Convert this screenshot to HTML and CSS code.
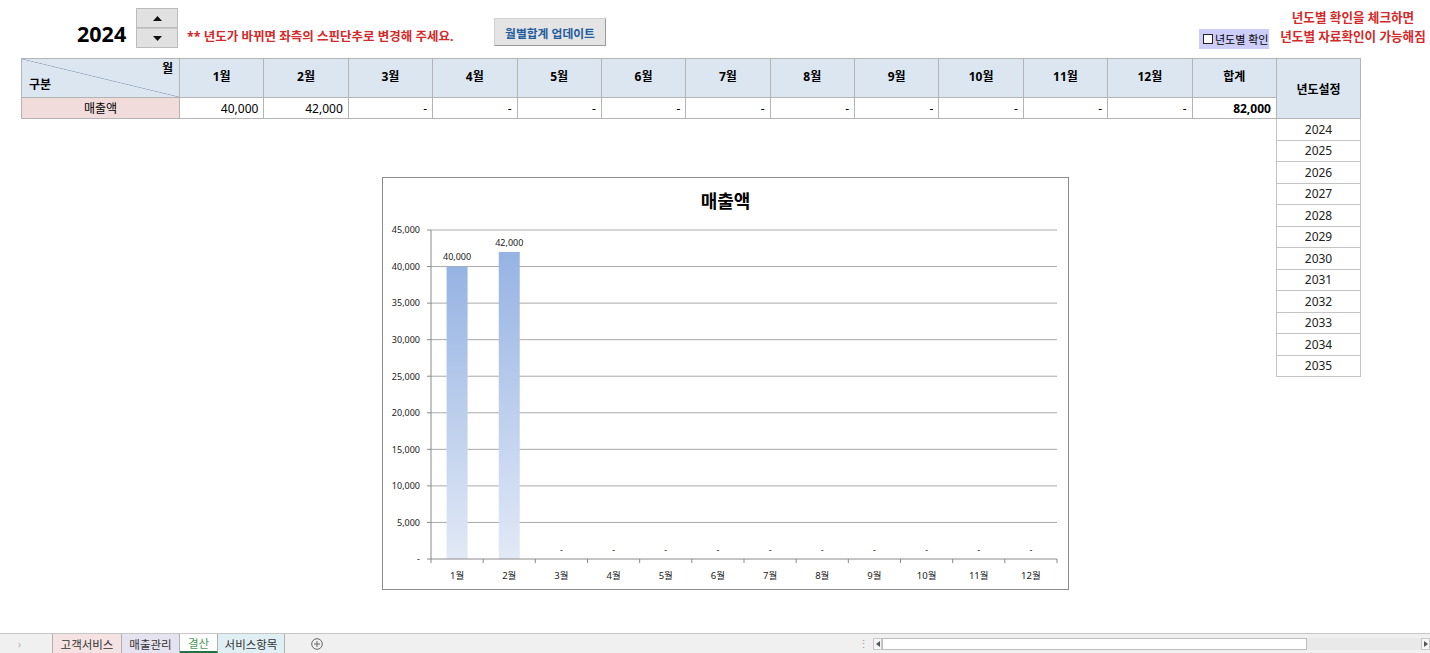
FILE: index.html
```html
<!DOCTYPE html>
<html lang="ko">
<head>
<meta charset="utf-8">
<title>결산</title>
<link rel="stylesheet" href="styles.css">
</head>
<body>
<div class="page">
  <header class="topbar">
    <div class="year">2024</div>
    <div class="spin">
      <div class="spin-btn"><svg width="9" height="5" viewBox="0 0 9 5"><polygon points="0,5 9,5 4.5,0" fill="#111"/></svg></div>
      <div class="spin-btn"><svg width="9" height="5" viewBox="0 0 9 5"><polygon points="0,0 9,0 4.5,5" fill="#111"/></svg></div>
    </div>
    <div class="note">** 년도가 바뀌면 좌측의 스핀단추로 변경해 주세요.</div>
    <div class="update-btn">월별합계 업데이트</div>
    <div class="spacer"></div>
    <div class="check"><span class="box"></span><span>년도별 확인</span></div>
    <div class="hint">년도별 확인을 체크하면<br>년도별 자료확인이 가능해짐</div>
  </header>

  <main class="main">
    <section class="left">
      <div class="grid">
        <div class="cell head diag"><span class="diag-top">월</span><span class="diag-bottom">구분</span></div>
        <div class="cell head">1월</div>
        <div class="cell head">2월</div>
        <div class="cell head">3월</div>
        <div class="cell head">4월</div>
        <div class="cell head">5월</div>
        <div class="cell head">6월</div>
        <div class="cell head">7월</div>
        <div class="cell head">8월</div>
        <div class="cell head">9월</div>
        <div class="cell head">10월</div>
        <div class="cell head">11월</div>
        <div class="cell head">12월</div>
        <div class="cell head">합계</div>

        <div class="cell label">매출액</div>
        <div class="cell num">40,000</div>
        <div class="cell num">42,000</div>
        <div class="cell num">-</div>
        <div class="cell num">-</div>
        <div class="cell num">-</div>
        <div class="cell num">-</div>
        <div class="cell num">-</div>
        <div class="cell num">-</div>
        <div class="cell num">-</div>
        <div class="cell num">-</div>
        <div class="cell num">-</div>
        <div class="cell num">-</div>
        <div class="cell num total">82,000</div>
      </div>

      <div class="chart">
        <svg class="chart-svg" width="685" height="411" viewBox="0 0 685 411">
          <defs>
            <linearGradient id="barGrad" x1="0" y1="0" x2="0" y2="1">
              <stop offset="0" stop-color="#95b3e3"/>
              <stop offset="1" stop-color="#e2e9f6"/>
            </linearGradient>
          </defs>
          <text class="title" x="342.5" y="30" text-anchor="middle">매출액</text>

          <g class="grid-lines">
            <line x1="48" y1="52" x2="674" y2="52"/>
            <line x1="48" y1="88.56" x2="674" y2="88.56"/>
            <line x1="48" y1="125.11" x2="674" y2="125.11"/>
            <line x1="48" y1="161.67" x2="674" y2="161.67"/>
            <line x1="48" y1="198.22" x2="674" y2="198.22"/>
            <line x1="48" y1="234.78" x2="674" y2="234.78"/>
            <line x1="48" y1="271.33" x2="674" y2="271.33"/>
            <line x1="48" y1="307.89" x2="674" y2="307.89"/>
            <line x1="48" y1="344.44" x2="674" y2="344.44"/>
          </g>

          <rect x="63.58" y="88.56" width="21" height="292.44" fill="url(#barGrad)"/>
          <rect x="115.75" y="73.93" width="21" height="307.07" fill="url(#barGrad)"/>

          <g class="axis">
            <line x1="48" y1="52" x2="48" y2="381"/>
            <line x1="44" y1="381" x2="674" y2="381"/>
            <line x1="44" y1="52" x2="48" y2="52"/>
            <line x1="44" y1="88.56" x2="48" y2="88.56"/>
            <line x1="44" y1="125.11" x2="48" y2="125.11"/>
            <line x1="44" y1="161.67" x2="48" y2="161.67"/>
            <line x1="44" y1="198.22" x2="48" y2="198.22"/>
            <line x1="44" y1="234.78" x2="48" y2="234.78"/>
            <line x1="44" y1="271.33" x2="48" y2="271.33"/>
            <line x1="44" y1="307.89" x2="48" y2="307.89"/>
            <line x1="44" y1="344.44" x2="48" y2="344.44"/>
            <line x1="48" y1="381" x2="48" y2="385"/>
            <line x1="100.17" y1="381" x2="100.17" y2="385"/>
            <line x1="152.33" y1="381" x2="152.33" y2="385"/>
            <line x1="204.5" y1="381" x2="204.5" y2="385"/>
            <line x1="256.67" y1="381" x2="256.67" y2="385"/>
            <line x1="308.83" y1="381" x2="308.83" y2="385"/>
            <line x1="361" y1="381" x2="361" y2="385"/>
            <line x1="413.17" y1="381" x2="413.17" y2="385"/>
            <line x1="465.33" y1="381" x2="465.33" y2="385"/>
            <line x1="517.5" y1="381" x2="517.5" y2="385"/>
            <line x1="569.67" y1="381" x2="569.67" y2="385"/>
            <line x1="621.83" y1="381" x2="621.83" y2="385"/>
            <line x1="674" y1="381" x2="674" y2="385"/>
          </g>

          <g class="ylab" text-anchor="end">
            <text x="37" y="55.3">45,000</text>
            <text x="37" y="91.9">40,000</text>
            <text x="37" y="128.4">35,000</text>
            <text x="37" y="165">30,000</text>
            <text x="37" y="201.5">25,000</text>
            <text x="37" y="238.1">20,000</text>
            <text x="37" y="274.6">15,000</text>
            <text x="37" y="311.2">10,000</text>
            <text x="37" y="347.7">5,000</text>
            <text x="37" y="384.3">-</text>
          </g>

          <g class="dlab" text-anchor="middle">
            <text x="74.08" y="82">40,000</text>
            <text x="126.25" y="67.5">42,000</text>
            <text x="178.42" y="374.5">-</text>
            <text x="230.58" y="374.5">-</text>
            <text x="282.75" y="374.5">-</text>
            <text x="334.92" y="374.5">-</text>
            <text x="387.08" y="374.5">-</text>
            <text x="439.25" y="374.5">-</text>
            <text x="491.42" y="374.5">-</text>
            <text x="543.58" y="374.5">-</text>
            <text x="595.75" y="374.5">-</text>
            <text x="647.92" y="374.5">-</text>
          </g>

          <g class="xlab" text-anchor="middle">
            <text x="74.08" y="401">1월</text>
            <text x="126.25" y="401">2월</text>
            <text x="178.42" y="401">3월</text>
            <text x="230.58" y="401">4월</text>
            <text x="282.75" y="401">5월</text>
            <text x="334.92" y="401">6월</text>
            <text x="387.08" y="401">7월</text>
            <text x="439.25" y="401">8월</text>
            <text x="491.42" y="401">9월</text>
            <text x="543.58" y="401">10월</text>
            <text x="595.75" y="401">11월</text>
            <text x="647.92" y="401">12월</text>
          </g>
        </svg>
      </div>
    </section>

    <aside class="years">
      <div class="years-head">년도설정</div>
      <div class="year-row">2024</div>
      <div class="year-row">2025</div>
      <div class="year-row">2026</div>
      <div class="year-row">2027</div>
      <div class="year-row">2028</div>
      <div class="year-row">2029</div>
      <div class="year-row">2030</div>
      <div class="year-row">2031</div>
      <div class="year-row">2032</div>
      <div class="year-row">2033</div>
      <div class="year-row">2034</div>
      <div class="year-row">2035</div>
    </aside>
  </main>

  <footer class="tabs">
    <div class="nav">›</div>
    <div class="tab tab-pink">고객서비스</div>
    <div class="tab tab-lav">매출관리</div>
    <div class="tab tab-active">결산</div>
    <div class="tab tab-cyan">서비스항목</div>
    <div class="add">
      <svg width="12" height="12" viewBox="0 0 12 12"><circle cx="6" cy="6" r="5.3" fill="none" stroke="#666" stroke-width="1"/><line x1="6" y1="3" x2="6" y2="9" stroke="#666"/><line x1="3" y1="6" x2="9" y2="6" stroke="#666"/></svg>
    </div>
    <div class="spacer"></div>
    <div class="dots">⋮</div>
    <div class="hscroll">
      <div class="arrow-btn"><svg width="4" height="6" viewBox="0 0 4 6"><polygon points="4,0 4,6 0,3" fill="#555"/></svg></div>
      <div class="thumb"></div>
      <div class="track"></div>
      <div class="arrow-btn"><svg width="4" height="6" viewBox="0 0 4 6"><polygon points="0,0 0,6 4,3" fill="#555"/></svg></div>
    </div>
  </footer>
</div>
</body>
</html>
```

FILE: styles.css
```css
* { box-sizing: border-box; }
html, body { margin: 0; padding: 0; }
body {
  font-family: "Noto Sans", "Noto Sans CJK KR", sans-serif;
  color: #000;
  background: #fff;
}
.page {
  width: 1430px;
  height: 653px;
  display: flex;
  flex-direction: column;
  overflow: hidden;
}

/* top bar */
.topbar {
  height: 58px;
  flex: none;
  display: flex;
  align-items: flex-start;
}
.year {
  margin-left: 77px;
  margin-top: 21px;
  width: 50px;
  font-size: 21.5px;
  font-weight: 700;
  line-height: 26px;
  white-space: nowrap;
}
.spin {
  margin-left: 9px;
  margin-top: 8px;
  width: 42px;
  display: flex;
  flex-direction: column;
}
.spin-btn {
  height: 20px;
  background: #e1e1e1;
  border: 1px solid #bcbcbc;
  display: flex;
  align-items: center;
  justify-content: center;
}
.spin-btn + .spin-btn { border-top-color: #c8c8c8; }
.note {
  margin-left: 9px;
  margin-top: 29px;
  width: 307px;
  font-size: 12.5px;
  font-weight: 700;
  color: #d22a2a;
  line-height: 16px;
  white-space: nowrap;
}
.update-btn {
  margin-top: 18px;
  width: 112px;
  height: 28px;
  background: #e4e4e4;
  border: 1px solid #d0d0d0;
  border-right-color: #9a9a9a;
  border-bottom-color: #9a9a9a;
  font-size: 11.8px;
  font-weight: 700;
  color: #1f5c9e;
  display: flex;
  align-items: center;
  justify-content: center;
  white-space: nowrap;
}
.spacer { flex: 1; }
.check {
  margin-top: 29px;
  margin-right: 7px;
  width: 70px;
  height: 20px;
  background: #cdcdf9;
  display: flex;
  align-items: center;
  padding-left: 4px;
  gap: 2px;
  font-size: 11px;
  white-space: nowrap;
}
.box {
  width: 10px;
  height: 10px;
  border: 1px solid #222;
  background: #fff;
  flex: none;
}
.hint {
  margin-top: 8px;
  width: 154px;
  text-align: center;
  color: #d22a2a;
  font-weight: 700;
  font-size: 12.6px;
  line-height: 19px;
  white-space: nowrap;
}

/* main */
.main {
  flex: 1;
  display: flex;
  align-items: flex-start;
}
.left {
  margin-left: 21px;
  width: 1256px;
  flex: none;
}
.grid {
  display: grid;
  grid-template-columns: 158px repeat(13, 84.38px);
  grid-template-rows: 39px 21px;
  border-left: 1px solid #b4b4b4;
  border-top: 1px solid #b4b4b4;
}
.cell {
  border-right: 1px solid #b4b4b4;
  border-bottom: 1px solid #b4b4b4;
  font-size: 12px;
  display: flex;
  align-items: center;
  white-space: nowrap;
}
.head {
  background: #dce6f1;
  font-weight: 700;
  justify-content: center;
  padding-bottom: 5px;
}
.diag {
  background: #dce6f1 linear-gradient(to top right, transparent calc(50% - 0.7px), #9aa9bb 50%, transparent calc(50% + 0.7px));
  flex-direction: column;
  align-items: stretch;
  justify-content: space-between;
  padding: 2px 6px 4px 7px;
}
.diag-top { text-align: right; line-height: 16px; }
.diag-bottom { text-align: left; line-height: 16px; }
.label {
  background: #f2dcdb;
  justify-content: center;
}
.num {
  justify-content: flex-end;
  padding-right: 5px;
}
.total { font-weight: 700; }

/* chart */
.chart {
  margin-top: 58px;
  margin-left: 361px;
  width: 687px;
  height: 413px;
  border: 1px solid #8c8c8c;
  background: #fff;
}
.chart-svg { display: block; }
.chart-svg text { font-family: "Noto Sans", "Noto Sans CJK KR", sans-serif; fill: #1a1a1a; }
.chart-svg .title { font-size: 18px; font-weight: 700; fill: #000; }
.chart-svg .ylab text, .chart-svg .dlab text { font-size: 9px; }
.chart-svg .xlab text { font-size: 9.5px; }
.grid-lines line { stroke: #a9a9a9; stroke-width: 1; }
.axis line { stroke: #8a8a8a; stroke-width: 1; }

/* year list */
.years {
  margin-left: -1px;
  width: 85px;
  flex: none;
}
.years-head {
  height: 61px;
  background: #dce6f1;
  border: 1px solid #b4b4b4;
  display: flex;
  align-items: center;
  justify-content: center;
  font-weight: 700;
  font-size: 12px;
}
.year-row {
  height: 21.5px;
  border: 1px solid #c4c4c4;
  border-top: none;
  display: flex;
  align-items: center;
  justify-content: center;
  font-size: 12px;
  color: #222;
}

/* sheet tabs */
.tabs {
  height: 20px;
  flex: none;
  border-top: 1px solid #c6c6c6;
  background: #f0f0f0;
  display: flex;
  align-items: stretch;
  font-size: 11.5px;
  color: #333;
}
.nav {
  width: 53px;
  border-right: 1px solid #b0b0b0;
  color: #b0b0b0;
  font-size: 10px;
  padding-left: 18px;
  display: flex;
  align-items: center;
}
.tab {
  display: flex;
  align-items: center;
  justify-content: center;
  border-right: 1px solid #b0b0b0;
  white-space: nowrap;
}
.tab-pink { width: 69px; background: #f5e3e3; }
.tab-lav { width: 58px; background: #e6e3f0; }
.tab-active {
  width: 38px;
  background: #fff;
  color: #4c9a5c;
  border-bottom: 2px solid #217346;
}
.tab-cyan { width: 67px; background: #dfeff4; }
.add {
  margin-left: 26px;
  display: flex;
  align-items: center;
}
.dots {
  width: 14px;
  color: #999;
  font-size: 11px;
  display: flex;
  align-items: center;
  justify-content: center;
  margin-right: 1px;
}
.hscroll {
  width: 559px;
  display: flex;
  align-items: center;
  padding: 0 0 0 2px;
}
.arrow-btn {
  width: 9px;
  height: 12px;
  display: flex;
  align-items: center;
  justify-content: center;
  border: 1px solid #c8c8c8;
  background: #f6f6f6;
}
.thumb {
  width: 425px;
  height: 12px;
  background: #fff;
  border: 1px solid #bdbdbd;
}
.track {
  flex: 1;
  height: 12px;
  background: #e9e9e9;
}
```
